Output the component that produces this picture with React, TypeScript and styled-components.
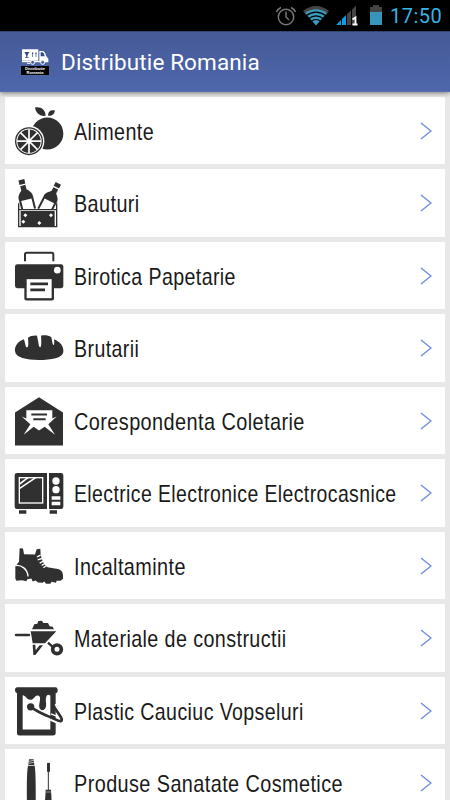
import React from "react";
import styled, { createGlobalStyle } from "styled-components";

const GlobalStyle = createGlobalStyle`
  html, body { margin: 0; padding: 0; background: #e8e8e8; }
  body { overflow: hidden; }
`;

const Screen = styled.div`
  display: flex;
  flex-direction: column;
  width: 450px;
  height: 800px;
  overflow: hidden;
  background: #e8e8e8;
`;

const StatusBar = styled.div`
  flex: none;
  display: flex;
  justify-content: flex-end;
  height: 31px;
  background: #000;
`;

const StatusIcons = styled.svg`
  display: block;
  width: 120px;
  height: 31px;
`;

const Clock = styled.span`
  width: 60px;
  font: 20px/32px Roboto, sans-serif;
  color: #33b5e5;
  white-space: nowrap;
  letter-spacing: 0.5px;
`;

const AppBar = styled.header`
  flex: none;
  box-sizing: border-box;
  display: flex;
  align-items: center;
  height: 61px;
  padding-left: 21px;
  border-top: 1px solid #354572;
  border-bottom: 1px solid #5a6cab;
  background: linear-gradient(#455a96, #4e66ac);
  box-shadow: 0 1px 5px rgba(0, 0, 0, 0.5);
  z-index: 1;
`;

const Logo = styled.div`
  display: flex;
  flex-direction: column;
  width: 30px;
  height: 30px;
  margin-right: 10px;
  padding-top: 3px;
`;

const Truck = styled.svg`
  display: block;
  width: 30px;
  height: 18px;
`;

const LogoCaption = styled.div`
  box-sizing: border-box;
  width: 28px;
  height: 9px;
  padding-top: 1px;
  overflow: hidden;
  background: #000;
  color: #fff;
  font: bold 4px/3.5px "Liberation Sans", sans-serif;
  text-align: center;
`;

const Title = styled.h1`
  margin: 0;
  font: 400 22.5px/28px Roboto, sans-serif;
  letter-spacing: 0.12px;
  color: #fff;
  white-space: nowrap;
  padding-top: 1px;
`;

const List = styled.main`
  display: flex;
  flex-direction: column;
  gap: 5px;
  padding: 4.5px 5px 0;
`;

const Row = styled.div`
  flex: none;
  box-sizing: border-box;
  display: flex;
  align-items: center;
  height: 67.5px;
  padding: 1px 13px 0 10px;
  background: #fff;
`;

const Icon = styled.svg`
  flex: none;
  display: block;
  width: 48.33px;
  height: 48.33px;
  margin-right: 11px;
  overflow: visible;
`;

const Label = styled.span<{ $stretch: number }>`
  flex: 1;
  min-width: 0;
  font: 24px/30px "Liberation Sans", sans-serif;
  letter-spacing: 0.5px;
  color: #1a1a1a;
  white-space: nowrap;
  transform: scaleX(${(p) => p.$stretch});
  transform-origin: left center;
  padding-top: 2px;
`;

const Chevron = styled.svg`
  flex: none;
  display: block;
  width: 12px;
  height: 18px;
`;

const D = "#303030";

const Orange = () => (
  <>
    <circle cx="142" cy="123" r="48" fill={D} />
    <path d="M105 45C122 41 137 52 137 70C120 73 107 61 105 45ZM144 69C144 56 153 51 165 54C163 66 155 72 144 69Z" fill={D} />
    <circle cx="87" cy="146" r="46" fill="#fff" />
    <circle cx="87" cy="146" r="40" fill="none" stroke={D} strokeWidth="4" />
    <circle cx="87" cy="146" r="35" fill={D} />
    <path d="M87 110V182M51 146H123M61.500 120.500L112.500 171.500M61.500 171.500L112.500 120.500" stroke="#fff" strokeWidth="5" />
    <circle cx="87" cy="146" r="7" fill="#fff" />
  </>
);

const Bottles = () => (
  <>
    <g transform="translate(64 44) rotate(-14)">
      <path d="M-9 0H9V14H-9ZM-8 18H8V32C14 38 22 44 22 56V94H-22V56C-22 44 -14 38 -8 32Z" fill={D} />
      <path d="M-16 62H16V94H-16Z" fill="#fff" />
    </g>
    <g transform="translate(175 55) rotate(27)">
      <path d="M-9 0H9V13H-9ZM-8 17H8V30C14 36 22 42 22 53V95H-22V53C-22 42 -14 36 -8 30Z" fill={D} />
      <path d="M-16 59H16V95H-16Z" fill="#fff" />
    </g>
    <path d="M58 134H168V187H58Z" fill="#fff" />
    <path d="M56 115V185H170V115M58 134H168" fill="none" stroke={D} strokeWidth="4" />
    <path d="M62 138H164V183H62Z" fill={D} />
    <path d="M76 145l6 6-6 6-6-6ZM153 145l6 6-6 6-6-6ZM70 164l6 6-6 6-6-6ZM118 168l6 6-6 6-6-6Z" fill="#fff" />
  </>
);

const Printer = () => (
  <>
    <path d="M75 68V48Q75 43 80 43H155Q160 43 160 48V68" fill="none" stroke={D} strokeWidth="6" />
    <rect x="45" y="77" width="145" height="72" rx="7" fill={D} />
    <circle cx="172" cy="95" r="10" fill="#fff" />
    <path d="M73 122H162V180Q162 186 156 186H79Q73 186 73 180Z" fill={D} />
    <path d="M80 122H155V179H80Z" fill="#fff" />
    <path d="M91 136H144M91 154H135" stroke={D} strokeWidth="8" />
  </>
);

const Bread = () => (
  <path d="M45 124C43 107 56 93 72 88L78 111C85 114 86 108 84 83C91 78 101 76 111 77L117 108C121 117 126 111 123 77C135 75 145 76 154 82L158 102C162 111 164 100 162 88C180 95 192 109 190 126C188 144 154 150 116 150C79 150 47 143 45 124Z" fill={D} />
);

const Envelope = () => (
  <>
    <path d="M45 87L117 41L189 87V186H45Z" fill={D} />
    <path d="M79 80H157V105L170 99L145 122L165 154L134 130L117 141L101 130L71 154L91 122L65 99L79 105Z" fill="#fff" />
    <path d="M94 93H141M100 107H137" stroke={D} strokeWidth="6" />
  </>
);

const Microwave = () => (
  <>
    <path d="M51 51H141V159H51Q44 159 44 152V58Q44 51 51 51ZM147 51H183Q190 51 190 58V152Q190 159 183 159H147Z" fill={D} />
    <rect x="58" y="65" width="70" height="76" fill={D} stroke="#fff" strokeWidth="4" />
    <path d="M59 97L107 65M59 84L84 65" stroke="#fff" strokeWidth="5" />
    <circle cx="168" cy="75" r="11" fill="#fff" />
    <circle cx="168" cy="101" r="11" fill="#fff" />
    <path d="M155 121H181V131H155ZM155 137H181V148H155Z" fill="#fff" />
    <path d="M57 163H79V173H57ZM149 163H171V173H149Z" fill={D} />
  </>
);

const Boot = () => (
  <>
    <path d="M59 59L69 60L72 77L105 78L110 62L121 61L122 78C125 91 130 108 143 116L164 120C183 122 191 127 189 151L182 157L170 157L168 163L155 160L151 166L138 166L133 159L128 163L114 162L107 156L98 159L94 150L82 152L79 158L66 155L49 157L46 150L46 113L57 100Z" fill={D} />
    <path d="M46 111C64 108 83 122 84 144" fill="none" stroke="#fff" strokeWidth="4" />
    <path d="M111 85L122 80M113 94L126 90M119 104L130 98M125 111L136 104M130 118L141 110" stroke="#fff" strokeWidth="4" />
  </>
);

const Wheelbarrow = () => (
  <>
    <path d="M48 105H87" stroke={D} strokeWidth="7" strokeLinecap="round" />
    <path d="M92 94H169L135 130H98ZM96 88L103 73L112 71L115 63L126 62L130 69L144 69L149 79L158 80L162 88Z" fill={D} />
    <path d="M98 134L100 165L106 165L129 136H119L107 151L106 134Z" fill={D} />
    <path d="M144 128L157 140" stroke={D} strokeWidth="7" />
    <circle cx="171" cy="148" r="13" fill="none" stroke={D} strokeWidth="11" />
  </>
);

const PaintCan = () => (
  <>
    <path d="M52 41H166Q173 41 173 50Q173 59 167 59V180Q167 186 159 186H58Q51 186 51 180V59Q45 58 45 50Q45 41 52 41Z" fill={D} />
    <path d="M68 65C75 64 80 77 90 79C102 80 103 65 113 66C122 67 121 76 119 86C116 97 117 108 126 110C139 109 139 96 138 86C137 75 138 65 145 64L151 66V168H68Z" fill="#fff" />
    <path d="M150 138L176 149" stroke="#fff" strokeWidth="7" />
    <path d="M166 92L186 123" stroke="#fff" strokeWidth="5" />
    <circle cx="92" cy="100" r="11" fill={D} />
    <path d="M92 100C118 120 151 130 176 142C187 146 187 138 182 130L164 103" fill="none" stroke={D} strokeWidth="8" />
    <path d="M153 121L168 127" stroke="#fff" strokeWidth="4" />
  </>
);

const Mascara = () => (
  <>
    <path d="M87 259H101L103 276H85ZM84 278H104Q108 300 107 403H81Q79 300 84 278Z" fill={D} />
    <path d="M86 265L102 262M86 271L102 268" stroke="#fff" strokeWidth="2" />
    <rect x="141" y="269" width="9" height="28" rx="3" fill={D} />
    <path d="M145 294V352" stroke={D} strokeWidth="3" />
    <path d="M137 350H153L156 403H134Z" fill={D} />
    <path d="M137 357H153" stroke="#fff" strokeWidth="1.500" />
  </>
);

const categories = [
  { label: "Alimente", top: 43.5, stretch: 0.822, Art: Orange },
  { label: "Bauturi", top: 42, stretch: 0.825, Art: Bottles },
  { label: "Birotica Papetarie", top: 40.5, stretch: 0.816, Art: Printer },
  { label: "Brutarii", top: 42, stretch: 0.815, Art: Bread },
  { label: "Corespondenta Coletarie", top: 40.5, stretch: 0.829, Art: Envelope },
  { label: "Electrice Electronice Electrocasnice", top: 39, stretch: 0.81, Art: Microwave },
  { label: "Incaltaminte", top: 40.5, stretch: 0.826, Art: Boot },
  { label: "Materiale de constructii", top: 42, stretch: 0.821, Art: Wheelbarrow },
  { label: "Plastic Cauciuc Vopseluri", top: 40.5, stretch: 0.815, Art: PaintCan },
  { label: "Produse Sanatate Cosmetice", top: 258, stretch: 0.827, Art: Mascara },
];

const App = () => (
  <>
    <GlobalStyle />
    <Screen>
      <StatusBar>
        <StatusIcons viewBox="270 0 120 31">
          <g fill="none" stroke="#777" strokeWidth="1.500">
            <circle cx="286" cy="17" r="7.700" />
            <path d="M286 11.500V17L289 20M276.500 12Q277.500 9 281 7.500M295.500 12Q294.500 9 291 7.500" />
          </g>
          <path d="M303 11Q316 1 329 11L325.500 15Q316 8 306.500 15Z" fill="#444" />
          <path d="M305 13Q316 5.500 327 13L316 25.500Z" fill="#3a9abf" />
          <path d="M306 15.800Q316 8.500 326 15.800M308.500 18.700Q316 13 323.500 18.700M311 21.500Q316 17.500 321 21.500" fill="none" stroke="#000" strokeWidth="1.200" />
          <path d="M336 25L341 20V25ZM342 19L346 15V25H342Z" fill="#0d9de8" />
          <path d="M347 14L351 10.500V25H347ZM352 9.500L356 5.500V25H352Z" fill="#444" />
          <path d="M352.500 19.500L355.500 17.500V24.500M352.500 24.500H357.500" fill="none" stroke="#fff" strokeWidth="1.800" />
          <path d="M370 7H373V5H379V7H382V12H370Z" fill="#444" />
          <path d="M370 12H382V25H370Z" fill="#3795bb" />
        </StatusIcons>
        <Clock>17:50</Clock>
      </StatusBar>
      <AppBar>
        <Logo>
          <Truck viewBox="66 147 90 54">
            <path d="M69 151H118V185H69ZM121 156H131Q139 158 141 170L148 179V190H69V186H121Z" fill="#fff" />
            <path d="M125 160H131Q136 163 137 172H125ZM76 159H91L86 168L85 174H89V176H78V174H82L81 168ZM98 164L101 159L104 164H102V174H100V164ZM108 164L111 159L114 164H112V174H110V164Z" fill="#334b8c" />
            <circle cx="101" cy="190" r="6" fill="#4b60a3" stroke="#fff" strokeWidth="3" />
            <circle cx="131" cy="190" r="6" fill="#4b60a3" stroke="#fff" strokeWidth="3" />
            <path d="M84 193H93" stroke="#fff" strokeWidth="3" />
          </Truck>
          <LogoCaption>Distributie<br />Romania</LogoCaption>
        </Logo>
        <Title>Distributie Romania</Title>
      </AppBar>
      <List>
        {categories.map(({ label, top, stretch, Art }) => (
          <Row key={label}>
            <Icon viewBox={`45 ${top} 145 145`}>
              <Art />
            </Icon>
            <Label $stretch={stretch}>{label}</Label>
            <Chevron viewBox="0 0 12 18">
              <path d="M1 1L11 9L1 17" fill="none" stroke="#6b8ce0" strokeWidth="1.400" />
            </Chevron>
          </Row>
        ))}
      </List>
    </Screen>
  </>
);

export default App;
